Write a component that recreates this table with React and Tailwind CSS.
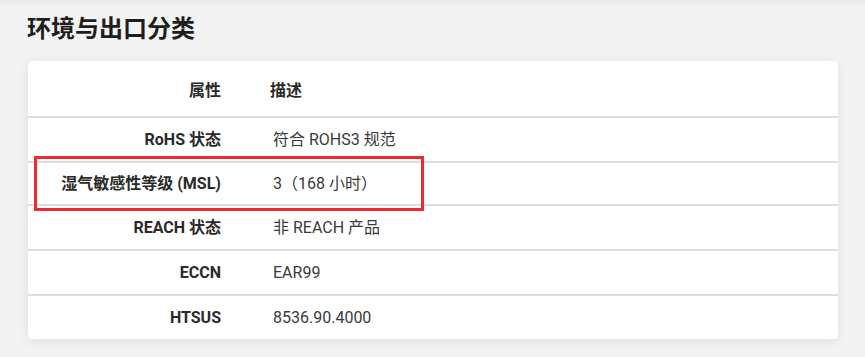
const rows = [
  { label: "RoHS 状态", value: "符合 ROHS3 规范", h: "h-[45px]" },
  { label: "湿气敏感性等级 (MSL)", value: "3（168 小时）", h: "h-[43px]" },
  { label: "REACH 状态", value: "非 REACH 产品", h: "h-[45px]" },
  { label: "ECCN", value: "EAR99", h: "h-[45px]" },
  { label: "HTSUS", value: "8536.90.4000", h: "h-[43px]", last: true },
];

export default function App() {
  return (
    <div
      className="w-[865px] h-[357px] bg-[#f3f3f3] shadow-[inset_0_6px_8px_-6px_rgba(0,0,0,0.08)] pt-[13px] overflow-hidden"
      style={{ fontFamily: "Roboto, 'Noto Sans CJK SC', sans-serif" }}
    >
      <h2 className="ml-[27px] text-[24px] leading-[32px] font-bold text-[#1e1e1e]">
        环境与出口分类
      </h2>
      <div className="relative ml-[28px] mt-[16px] w-[810px] bg-white rounded-[4px] shadow-[0_2px_12px_rgba(0,0,0,0.09)]">
        <div className="flex h-[57px] items-center border-b-2 border-[#dedede] pt-[4px]">
          <div className="w-[193px] text-right text-[16px] font-bold text-[#2a2a2a]">属性</div>
          <div className="pl-[49px] text-[16px] font-bold text-[#2a2a2a]">描述</div>
        </div>
        {rows.map((r) => (
          <div
            key={r.label}
            className={`flex items-center ${r.h} ${r.last ? "" : "border-b-2 border-[#dedede]"}`}
          >
            <div className="w-[193px] text-right text-[16px] font-bold text-[#2a2a2a]">{r.label}</div>
            <div className="pl-[52px] text-[16px] text-[#3a3a3a]">{r.value}</div>
          </div>
        ))}
        {/* highlight frame around the MSL row */}
        <div className="absolute left-[6px] top-[95px] w-[390px] h-[55px] border-[3px] border-[#ee2b33]" />
      </div>
    </div>
  );
}
